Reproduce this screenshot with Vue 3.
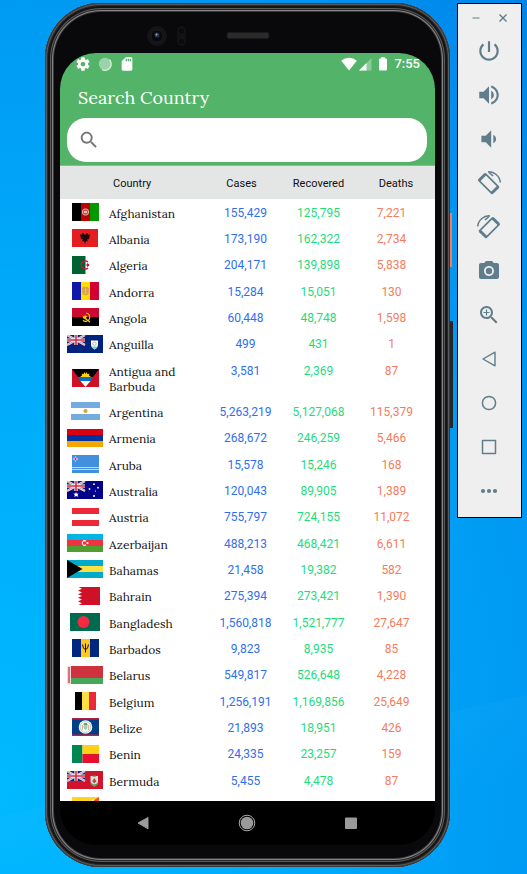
<script setup>
import { ref } from 'vue'

const query = ref('')

const box = (x, y, width, height, fill) => ['rect', { x, y, width, height, fill }]
const path = (d, fill) => ['path', { d, fill }]
const line = (d, stroke, width) => ['path', { d, stroke, 'stroke-width': width, fill: 'none' }]
const dot = (cx, cy, r, fill) => ['circle', { cx, cy, r, fill }]

const unionJack = [
  box(0, 0, 18, 10, '#16216f'),
  line('M0 0L18 10M18 0L0 10', '#f1e6ee', 2.2),
  line('M0 0L18 10M18 0L0 10', '#e0687c', 0.6),
  line('M9 0V10M0 5H18', '#fff', 3.2),
  line('M9 0V10M0 5H18', '#d62a45', 1.6)
]

const flags = {
  af: { w: 27, shapes: [box(0, 0, 9, 18, '#000'), box(9, 0, 9, 18, '#be0000'), box(18, 0, 9, 18, '#009900'), ['circle', { cx: 13.5, cy: 9, r: 3.2, fill: '#c8474a', stroke: '#eba9a9', 'stroke-width': 1 }], box(12, 8, 3, 2, '#f0c5c5')] },
  al: { w: 26, shapes: [box(0, 0, 26, 18, '#e41e20'), path('M13 6L11 4L9.500 5L10.500 6L8 5.500L9 10L11 10.500L10 12.500L12 12L13 15L14 12L16 12.500L15 10.500L17 10L18 5.500L15.500 6L16.500 5L15 4Z', '#250808')] },
  dz: { w: 27, shapes: [box(0, 0, 27, 18, '#fff'), box(0, 0, 13.5, 18, '#006233'), line('M16 6A4 4 0 1 0 16 12', '#d21034', 1.5), path('M13.500 9L15 8.300L15.200 6.800L16.200 8L17.600 7.700L16.800 9L17.600 10.300L16.200 10L15.200 11.200L15 9.700Z', '#d21034')] },
  ad: { w: 27, shapes: [box(0, 0, 9, 18, '#1018a8'), box(9, 0, 9, 18, '#fedf00'), box(18, 0, 9, 18, '#d50032'), path('M10 6Q12 4 13.500 5.500Q15 4 17 6L16.500 12L13.500 13.500L10.500 12Z', '#d3a04a'), line('M11.500 8H15.500M11.500 11H15.500M13.500 6V12', '#f1c45c', 0.8)] },
  ao: { w: 27, shapes: [box(0, 0, 27, 9, '#cc092f'), box(0, 9, 27, 9, '#000'), line('M14 5A4.200 4.200 0 1 1 11 12.500', '#ffcb00', 1.1), line('M11 9L18 14', '#ffcb00', 1.2), path('M13 6.500L13.700 8L15.500 8L14.200 9.300L14.600 11L13 10L11.500 11L12 9L10.500 8L12.500 8Z', '#ffcb00')] },
  ai: { w: 36, shapes: [box(0, 0, 36, 18, '#00247d'), ...unionJack, path('M24 5.500H31V9Q31 13 27.500 14.500Q24 13 24 9Z', '#fff'), path('M24.400 11.500H30.600Q29.500 13.500 27.500 14.300Q25.500 13.500 24.400 11.500Z', '#72cfcf'), line('M25.500 8Q27 6 29 7.500Q30 10 27.500 10.500Q25.500 10 25.500 8', '#e5a858', 0.9)] },
  ag: { w: 27, shapes: [box(0, 0, 27, 18, '#ce1126'), path('M0 0H27L13.500 18Z', '#000'), path('M8 8L10 6.500L9.700 4.500L11.500 5.200L12.500 3L13.500 5L14.700 3L15.500 5.200L17.500 4.500L17 6.500L19 8Z', '#fcd116'), path('M5.800 8H21.200L18.500 12H8.500Z', '#0072c6'), path('M8.500 12H18.500L13.500 18Z', '#fff')] },
  ar: { w: 29, shapes: [box(0, 0, 29, 18, '#fff'), box(0, 0, 29, 6, '#74acdf'), box(0, 12, 29, 6, '#74acdf'), dot(14.5, 9, 2.1, '#dda23f')] },
  am: { w: 36, shapes: [box(0, 0, 36, 6, '#d90012'), box(0, 6, 36, 6, '#0033a0'), box(0, 12, 36, 6, '#f2a800')] },
  aw: { w: 27, shapes: [box(0, 0, 27, 18, '#418fde'), box(0, 12, 27, 1, '#f6de45'), box(0, 14, 27, 1, '#f6de45'), path('M3.500 1L4.400 3.100L6.500 4L4.400 4.900L3.500 7L2.600 4.900L0.500 4L2.600 3.100Z', '#fff'), path('M3.500 2L4.100 3.400L5.500 4L4.100 4.600L3.500 6L2.900 4.600L1.500 4L2.900 3.400Z', '#e51937')] },
  au: { w: 36, shapes: [box(0, 0, 36, 18, '#00008b'), ...unionJack, path('M9 11L9.800 12.800L11.700 12.500L10.500 14L11.300 15.700L9 15L7.400 16L7.800 14L6.300 12.600L8.200 12.800Z', '#fff'), dot(27, 3.2, 0.9, '#fff'), dot(22.5, 8, 0.9, '#fff'), dot(31, 6.7, 0.9, '#fff'), dot(28.5, 10, 0.6, '#fff'), dot(27, 15, 1, '#fff')] },
  at: { w: 27, shapes: [box(0, 0, 27, 18, '#fff'), box(0, 0, 27, 6, '#ed2939'), box(0, 12, 27, 6, '#ed2939')] },
  az: { w: 36, shapes: [box(0, 0, 36, 6, '#00b5e2'), box(0, 6, 36, 6, '#ef3340'), box(0, 12, 36, 6, '#509e2f'), line('M19 7.200A2.300 2.300 0 1 0 19 10.800', '#fff', 1.1), dot(20.5, 9, 1.1, '#fff')] },
  bs: { w: 36, shapes: [box(0, 0, 36, 18, '#00abc9'), box(0, 6, 36, 6, '#fae042'), path('M0 0L15.500 9L0 18Z', '#000')] },
  bh: { w: 30, shapes: [box(0, 0, 30, 18, '#fff'), path('M30 0H8.500L12 1.800L8 3.600L12 5.400L8 7.200L12 9L8 10.800L12 12.600L8 14.400L12 16.200L8.500 18H30Z', '#ce1126')] },
  bd: { w: 30, shapes: [box(0, 0, 30, 18, '#006a4e'), dot(13.5, 9, 6, '#f42a41')] },
  bb: { w: 27, shapes: [box(0, 0, 27, 18, '#00267f'), box(9, 0, 9, 18, '#ffc726'), line('M13.500 4.500V13.500M10.500 5.500Q11 10.500 13.500 10.500Q16 10.500 16.500 5.500', '#171200', 1)] },
  by: { w: 36, shapes: [box(0, 0, 36, 12, '#ce323e'), box(0, 12, 36, 6, '#46a758'), box(0, 0, 4, 18, '#f3d9db'), line('M1 1L3 3L1 5L3 7L1 9L3 11L1 13L3 15L1 17M3 1L1 3L3 5L1 7L3 9L1 11L3 13L1 15L3 17', '#cf4350', 0.7)] },
  be: { w: 21, shapes: [box(0, 0, 7, 18, '#000'), box(7, 0, 7, 18, '#fae042'), box(14, 0, 7, 18, '#ed2939')] },
  bz: { w: 27, shapes: [box(0, 0, 27, 18, '#003f87'), box(0, 0, 27, 1.6, '#b52045'), box(0, 16.4, 27, 1.6, '#b52045'), dot(13.5, 9, 6.8, '#fff'), ['circle', { cx: 13.5, cy: 9, r: 5.4, fill: 'none', stroke: '#9dbf98', 'stroke-width': 0.7 }], path('M11.500 7H15.500V10L13.500 12.500L11.500 10Z', '#a9cbbb'), line('M10.300 7V12M16.700 7V12', '#b89070', 0.8), path('M11.500 6Q13.500 3.500 15.500 6V7H11.500Z', '#6d9d62')] },
  bj: { w: 27, shapes: [box(0, 0, 10.5, 18, '#008751'), box(10.5, 0, 16.5, 9, '#fcd116'), box(10.5, 9, 16.5, 9, '#e8112d')] },
  bm: { w: 36, shapes: [box(0, 0, 36, 18, '#cf142b'), ...unionJack, path('M23.500 5H31V10Q31 14 27.300 15.500Q23.500 14 23.500 10Z', '#dae2dc'), line('M24 12.500Q27.500 16 31 12.500', '#4b9b50', 1.6), path('M27.300 7L29.500 10.300L27.300 12.500L25.200 10.300Z', '#b34d50'), line('M25.500 5H29', '#63824e', 1.2)] },
  bt: { w: 27, shapes: [box(0, 0, 27, 18, '#ff4e12'), path('M0 0H27L0 18Z', '#ffd520'), path('M20 3L22 2L21.500 4L18.500 6Z', '#fff')] }
}

const rows = [
  ['af', 'Afghanistan', '155,429', '125,795', '7,221'],
  ['al', 'Albania', '173,190', '162,322', '2,734'],
  ['dz', 'Algeria', '204,171', '139,898', '5,838'],
  ['ad', 'Andorra', '15,284', '15,051', '130'],
  ['ao', 'Angola', '60,448', '48,748', '1,598'],
  ['ai', 'Anguilla', '499', '431', '1'],
  ['ag', 'Antigua and Barbuda', '3,581', '2,369', '87'],
  ['ar', 'Argentina', '5,263,219', '5,127,068', '115,379'],
  ['am', 'Armenia', '268,672', '246,259', '5,466'],
  ['aw', 'Aruba', '15,578', '15,246', '168'],
  ['au', 'Australia', '120,043', '89,905', '1,389'],
  ['at', 'Austria', '755,797', '724,155', '11,072'],
  ['az', 'Azerbaijan', '488,213', '468,421', '6,611'],
  ['bs', 'Bahamas', '21,458', '19,382', '582'],
  ['bh', 'Bahrain', '275,394', '273,421', '1,390'],
  ['bd', 'Bangladesh', '1,560,818', '1,521,777', '27,647'],
  ['bb', 'Barbados', '9,823', '8,935', '85'],
  ['by', 'Belarus', '549,817', '526,648', '4,228'],
  ['be', 'Belgium', '1,256,191', '1,169,856', '25,649'],
  ['bz', 'Belize', '21,893', '18,951', '426'],
  ['bj', 'Benin', '24,335', '23,257', '159'],
  ['bm', 'Bermuda', '5,455', '4,478', '87'],
  ['bt', '', '', '', '']
].map(([code, name, cases, recovered, deaths]) => ({ code, name, cases, recovered, deaths, flag: flags[code] }))

const fill = (d) => ['path', { d, fill: 'currentColor' }]
const stroke = (d, w) => ['path', { d, fill: 'none', stroke: 'currentColor', 'stroke-width': w, 'stroke-linejoin': 'round' }]

const rotated = [
  stroke('M8.500 2.800L1.800 9.400L14.800 22.400L21.500 15.800Z', 1.7),
  stroke('M8.300 3.200L2.200 9.200M14.800 22L21 16', 3),
  stroke('M11 .9C17 .3 22.700 5 23.300 11.500', 1.5),
  stroke('M12 1.500L16 5', 1.6)
]

const tools = [
  { label: 'Power', size: 26, shapes: [fill('M13 3h-2v10h2V3zm4.830 2.170l-1.420 1.420C17.990 7.860 19 9.810 19 12c0 3.870-3.130 7-7 7s-7-3.130-7-7c0-2.190 1.010-4.140 2.580-5.420L6.170 5.170C4.230 6.820 3 9.260 3 12c0 4.970 4.030 9 9 9s9-4.030 9-9c0-2.740-1.230-5.180-3.170-6.830z')] },
  { label: 'Volume up', size: 26, shapes: [fill('M3 9v6h4l5 5V4L7 9H3zm13.500 3c0-1.770-1.020-3.290-2.500-4.030v8.050c1.480-.73 2.500-2.250 2.500-4.020zM14 3.230v2.060c2.890.86 5 3.540 5 6.710s-2.110 5.850-5 6.710v2.060c4.010-.91 7-4.490 7-8.770s-2.990-7.860-7-8.770z')] },
  { label: 'Volume down', size: 26, shapes: [fill('M18.500 12c0-1.770-1.020-3.290-2.500-4.030v8.050c1.480-.73 2.500-2.250 2.500-4.020zM5 9v6h4l5 5V4L9 9H5z')] },
  { label: 'Rotate left', size: 24, shapes: rotated },
  { label: 'Rotate right', size: 24, shapes: [['g', { transform: 'matrix(-1 0 0 1 24 0)' }, rotated]] },
  { label: 'Take screenshot', size: 24, shapes: [['path', { 'fill-rule': 'evenodd', fill: 'currentColor', d: 'M9 2L7.170 4H4c-1.100 0-2 .9-2 2v12c0 1.100.9 2 2 2h16c1.100 0 2-.9 2-2V6c0-1.100-.9-2-2-2h-3.170L15 2H9zm3 15c-2.760 0-5-2.240-5-5s2.240-5 5-5 5 2.240 5 5-2.240 5-5 5z' }], dot(12, 12, 3.2, 'currentColor')] },
  { label: 'Zoom', size: 24, shapes: [fill('M15.500 14h-.79l-.28-.27C15.410 12.590 16 11.110 16 9.500 16 5.910 13.090 3 9.500 3S3 5.910 3 9.500 5.910 16 9.500 16c1.610 0 3.090-.59 4.230-1.570l.27.28v.79l5 4.990L20.490 19l-4.990-5zm-6 0C7.010 14 5 11.990 5 9.500S7.010 5 9.500 5 14 7.010 14 9.500 11.990 14 9.500 14z'), fill('M12.500 10.100h-2.400v2.400H8.900v-2.400H6.500V8.900h2.400V6.500h1.200v2.400h2.400z')] },
  { label: 'Back', size: 24, shapes: [stroke('M6 12L18 5.200V18.800Z', 1.4)] },
  { label: 'Home', size: 24, shapes: [['circle', { cx: 12, cy: 12, r: 6.6, fill: 'none', stroke: 'currentColor', 'stroke-width': 1.5 }]] },
  { label: 'Overview', size: 24, shapes: [stroke('M5.500 5.500H18.500V18.500H5.500Z', 1.5)] },
  { label: 'More', size: 24, shapes: [dot(6, 12, 2.1, 'currentColor'), dot(12, 12, 2.1, 'currentColor'), dot(18, 12, 2.1, 'currentColor')] }
]
</script>

<template>
  <div class="desktop">
    <main class="phone">
      <span class="side-key power-key"></span>
      <span class="side-key volume-key"></span>
      <svg class="sensors" viewBox="0 0 375 50" aria-hidden="true">
        <circle cx="97" cy="33" r="10" fill="#151517" />
        <circle cx="97" cy="33" r="6" fill="#08090d" stroke="#1b1c20" />
        <circle cx="97" cy="32" r="2.500" fill="#29344f" />
        <circle cx="96.500" cy="31.500" r="1" fill="#9aa8c4" />
        <rect x="117" y="23" width="9" height="20" rx="4.500" fill="#111113" />
        <circle cx="121.500" cy="28" r="3.500" fill="#0b0b0d" stroke="#161618" />
        <circle cx="121.500" cy="38.500" r="3.500" fill="#0b0b0d" stroke="#161618" />
        <rect x="167" y="29.500" width="42" height="6" rx="2" fill="#2b2a2a" stroke="#1b1a1a" />
      </svg>

      <div class="screen">
        <header class="app-header">
          <div class="status">
            <svg width="16" height="16" viewBox="0 0 24 24"><path fill="#fff" d="M19.430 12.980c.04-.32.07-.64.07-.98s-.03-.66-.07-.98l2.110-1.650c.19-.15.24-.42.12-.64l-2-3.460c-.12-.22-.39-.3-.61-.22l-2.490 1c-.52-.4-1.080-.73-1.690-.98l-.38-2.650C14.460 2.180 14.250 2 14 2h-4c-.25 0-.46.18-.49.42l-.38 2.650c-.61.25-1.170.59-1.690.98l-2.490-1c-.23-.09-.49 0-.61.22l-2 3.460c-.13.22-.07.49.12.64l2.110 1.650c-.04.32-.07.65-.07.98s.03.66.07.98l-2.110 1.650c-.19.15-.24.42-.12.64l2 3.460c.12.22.39.3.61.22l2.490-1c.52.4 1.080.73 1.690.98l.38 2.650c.03.24.24.42.49.42h4c.25 0 .46-.18.49-.42l.38-2.650c.61-.25 1.170-.59 1.690-.98l2.490 1c.23.09.49 0 .61-.22l2-3.460c.12-.22.07-.49-.12-.64zM12 15.500c-1.930 0-3.500-1.570-3.500-3.500s1.570-3.500 3.500-3.500 3.500 1.570 3.500 3.500-1.570 3.500-3.500 3.500z" /></svg>
            <svg width="16" height="16" viewBox="0 0 16 16"><circle cx="8" cy="8" r="6.200" fill="#9bd3a8" /><path d="M12.500 3.800A6.200 6.200 0 0 1 5 13.500" fill="none" stroke="#dff1e3" stroke-width="1.300" /></svg>
            <svg width="16" height="16" viewBox="0 0 24 24"><path fill="#fff" d="M18 2h-8L4.020 8 4 20c0 1.100.9 2 2 2h12c1.100 0 2-.9 2-2V4c0-1.100-.9-2-2-2zm-6 6h-2V4h2v4zm3 0h-2V4h2v4zm3 0h-2V4h2v4z" /></svg>
            <svg class="wifi" width="16" height="16" viewBox="0 0 16 16"><path fill="#fff" d="M8 14.500L.2 4.800Q3.500 1.800 8 1.800T15.800 4.800Z" /></svg>
            <svg width="14" height="16" viewBox="0 0 14 16"><path fill="#8acb99" d="M1 14.500L13.500 2V14.500Z" /><path fill="#fff" d="M1 14.500L8.500 7V14.500Z" /></svg>
            <svg class="battery" width="10" height="16" viewBox="0 0 10 16"><path fill="#fff" d="M3 1.200H7V2.500H8Q9 2.500 9 3.500V13.500Q9 14.500 8 14.500H2Q1 14.500 1 13.500V3.500Q1 2.500 2 2.500H3Z" /></svg>
            <time>7:55</time>
          </div>
          <h1><label for="country-search">Search Country</label></h1>
          <div class="search">
            <svg width="22" height="22" viewBox="0 0 24 24"><path fill="#757575" d="M15.500 14h-.79l-.28-.27C15.410 12.590 16 11.110 16 9.500 16 5.910 13.090 3 9.500 3S3 5.910 3 9.500 5.910 16 9.500 16c1.610 0 3.090-.59 4.230-1.570l.27.28v.79l5 4.990L20.490 19l-4.990-5zm-6 0C7.010 14 5 11.990 5 9.500S7.010 5 9.500 5 14 7.010 14 9.500 11.990 14 9.500 14z" /></svg>
            <input id="country-search" v-model="query" type="search" />
          </div>
        </header>

        <div class="list">
          <table>
            <colgroup>
              <col class="col-flag" /><col /><col class="col-number" /><col class="col-number" /><col class="col-number" /><col class="col-edge" />
            </colgroup>
            <thead>
              <tr>
                <th class="head-country" colspan="2">Country</th>
                <th class="head-cases">Cases</th>
                <th>Recovered</th>
                <th class="head-deaths">Deaths</th>
                <th></th>
              </tr>
            </thead>
            <tbody>
              <tr v-for="row in rows" :key="row.code">
                <td class="flag">
                  <svg :width="row.flag.w" height="18" :viewBox="`0 0 ${row.flag.w} 18`" aria-hidden="true">
                    <component :is="tag" v-for="([tag, attrs], i) in row.flag.shapes" :key="i" v-bind="attrs" />
                  </svg>
                </td>
                <td class="name">{{ row.name }}</td>
                <td class="cases">{{ row.cases }}</td>
                <td class="recovered">{{ row.recovered }}</td>
                <td class="deaths">{{ row.deaths }}</td>
                <td></td>
              </tr>
            </tbody>
          </table>
        </div>

        <nav class="nav">
          <button aria-label="Back"><svg width="20" height="20" viewBox="0 0 20 20"><path d="M5 10L15 4.500V15.800Z" fill="#9a9a9a" stroke="#9a9a9a" stroke-linejoin="round" /></svg></button>
          <button aria-label="Home"><svg width="20" height="20" viewBox="0 0 20 20"><circle cx="10" cy="10" r="6.300" fill="#9a9a9a" /><circle cx="10" cy="10" r="7.800" fill="none" stroke="#a8a8a8" /></svg></button>
          <button aria-label="Overview"><svg width="20" height="20" viewBox="0 0 20 20"><rect x="3" y="4.500" width="12" height="11.500" rx="1" fill="#9a9a9a" /></svg></button>
        </nav>
      </div>
    </main>

    <aside class="panel">
      <div class="window-keys">
        <button aria-label="Minimize"><svg width="12" height="12" viewBox="0 0 12 12"><path d="M2.500 6H9.500" stroke="#8fa3ac" stroke-width="1.500" /></svg></button>
        <button aria-label="Close"><svg width="12" height="12" viewBox="0 0 12 12"><path d="M2.500 2.500L9.500 9.500M9.500 2.500L2.500 9.500" stroke="#607d8b" stroke-width="1.400" /></svg></button>
      </div>
      <button v-for="tool in tools" :key="tool.label" class="tool" :aria-label="tool.label">
        <svg :width="tool.size" :height="tool.size" viewBox="0 0 24 24">
          <component :is="tag" v-for="([tag, attrs, children], i) in tool.shapes" :key="i" v-bind="attrs">
            <component :is="child[0]" v-for="(child, j) in children || []" :key="j" v-bind="child[1]" />
          </component>
        </svg>
      </button>
    </aside>
  </div>
</template>

<style>
body {
  margin: 0;
}
</style>

<style scoped>
* {
  box-sizing: border-box;
}

.desktop {
  display: flex;
  align-items: flex-start;
  gap: 7px;
  height: 100vh;
  padding: 3px 5px 7px 45px;
  overflow: hidden;
  font-family: Roboto, "Liberation Sans", sans-serif;
  background:
    linear-gradient(167deg, transparent 82%, rgba(70, 190, 255, 0.08) 82%, transparent 90%),
    radial-gradient(ellipse at 0% 90%, #00b9ff 0%, #00a9fa 45%, #0098f2 75%, #0085e9 100%);
}

button {
  display: flex;
  align-items: center;
  justify-content: center;
  padding: 0;
  border: 0;
  background: none;
  color: #607d8b;
}

svg {
  display: block;
  flex: none;
}

.phone {
  position: relative;
  display: flex;
  flex: 1;
  flex-direction: column;
  min-width: 0;
  height: 100%;
  padding: 0 15px 22px;
  border-radius: 56px;
  background: #09090b;
  box-shadow:
    inset 0 0 0 1px #3a3a3a,
    inset 0 0 0 2px #5a5a5a,
    inset 0 0 0 3px #2a2a2a,
    inset 0 0 0 5px #151515,
    inset 0 0 0 6px #5c5c5c,
    inset 0 0 0 7px #262626,
    inset 0 0 0 8px #858585,
    inset 0 0 0 9px #3a3a3a;
}

.side-key {
  position: absolute;
  left: 100%;
}

.power-key {
  top: 210px;
  width: 2px;
  height: 54px;
  background: #ef7d64;
}

.volume-key {
  top: 318px;
  width: 3px;
  height: 107px;
  background: #20272b;
}

.sensors {
  width: 100%;
  height: 50px;
}

.screen {
  display: flex;
  flex: 1;
  flex-direction: column;
  min-height: 0;
  overflow: hidden;
  border-radius: 36px;
  background: #000;
}

.app-header {
  padding: 0 8px 3px 7px;
  border-bottom: 1px solid #7cc48e;
  background: #52b369;
}

.status {
  display: flex;
  align-items: center;
  gap: 6px;
  height: 21px;
  padding: 0 7px 0 8px;
  color: #fff;
}

.wifi {
  margin-left: auto;
}

.status .wifi + svg {
  margin-left: -5px;
}

time {
  font-size: 13px;
  font-weight: 500;
  line-height: 20px;
}

h1 {
  margin: 0;
  padding: 10px 11px 6px;
  color: #fff;
  font: 400 18px/28px Lora, "Liberation Serif", serif;
}

.search {
  display: flex;
  align-items: center;
  height: 44px;
  padding: 0 12px 0 11px;
  border-radius: 19px;
  background: #fff;
}

.search input {
  flex: 1;
  min-width: 0;
  height: 32px;
  padding: 0 8px;
  border: 0;
  outline: 0;
  background: none;
  font: inherit;
}

.list {
  flex: 1;
  min-height: 0;
  overflow: hidden;
  background: #fff;
}

table {
  width: 100%;
  table-layout: fixed;
  border-collapse: collapse;
}

.col-flag {
  width: 49px;
}

.col-number {
  width: 73px;
}

.col-edge {
  width: 7px;
}

th {
  height: 33px;
  padding: 2px 0 0;
  background: #e4e6e5;
  color: #111;
  font-size: 11px;
  font-weight: 400;
}

.head-country {
  padding-left: 53px;
  text-align: left;
}

.head-cases {
  padding-right: 8px;
}

.head-deaths {
  padding-left: 9px;
}

td {
  padding: 7px 0 4px;
  font-size: 12px;
  line-height: 15px;
  text-align: center;
  vertical-align: top;
}

tbody tr:nth-child(3n) {
  height: 27px;
}

.flag {
  padding: 4px 6px 4px 7px;
  vertical-align: middle;
}

.flag svg {
  margin: 0 auto;
}

.name {
  padding-right: 24px;
  color: #111;
  font-family: Lora, "Liberation Serif", serif;
  text-align: left;
}

.cases {
  color: #2f6fee;
}

.recovered {
  color: #1edc7c;
}

.deaths {
  color: #f57c5c;
}

.nav {
  display: flex;
  height: 44px;
  padding: 0 31px;
}

.nav button {
  flex: 1;
}

.panel {
  flex: none;
  width: 65px;
  padding-bottom: 4px;
  border: 1px solid #000;
  background: #efefef;
}

.window-keys {
  display: flex;
  justify-content: space-between;
  padding: 8px 12px 5px;
}

.tool {
  width: 100%;
  height: 44px;
  padding-right: 1px;
}
</style>
